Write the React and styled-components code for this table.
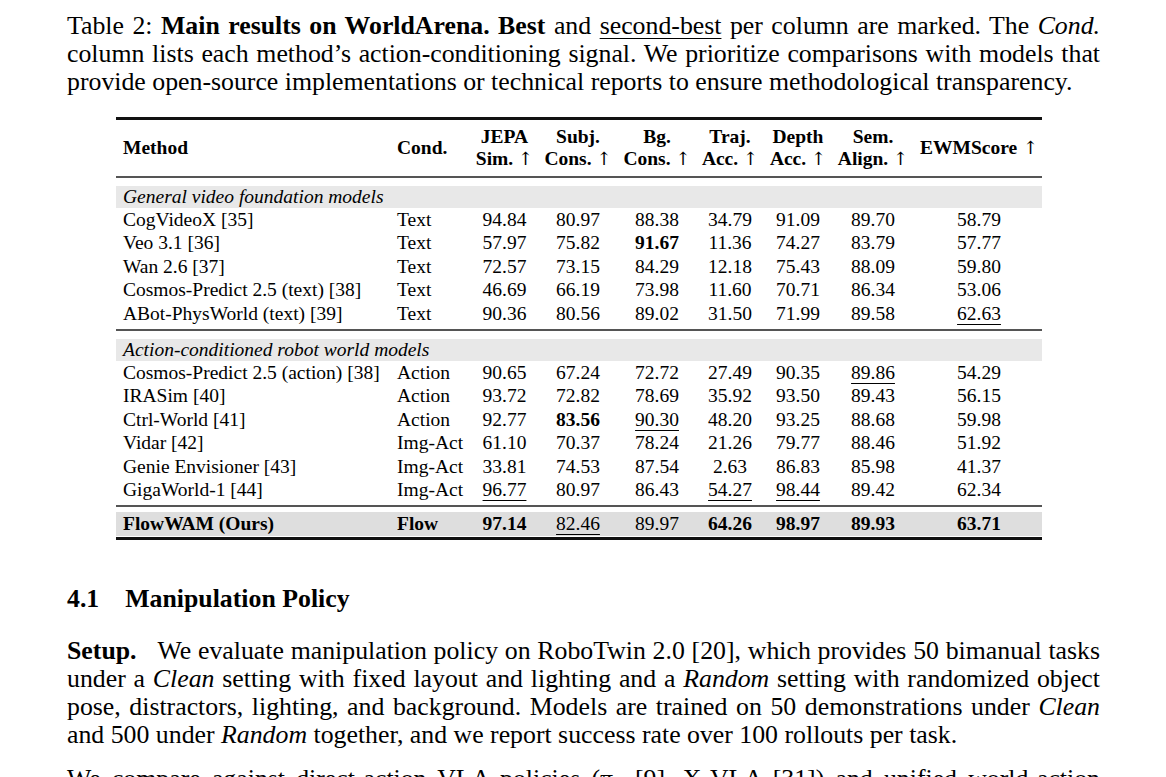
import React from "react";
import styled, { createGlobalStyle } from "styled-components";

const GlobalStyle = createGlobalStyle`
  html, body {
    margin: 0;
    padding: 0;
    background: #fff;
  }
  body {
    font-family: "Liberation Serif", "Times New Roman", serif;
    color: #000;
    overflow: hidden;
  }
`;

const general = [
  ["CogVideoX [35]", "Text", "94.84", "80.97", "88.38", "34.79", "91.09", "89.70", "58.79"],
  ["Veo 3.1 [36]", "Text", "57.97", "75.82", "*91.67", "11.36", "74.27", "83.79", "57.77"],
  ["Wan 2.6 [37]", "Text", "72.57", "73.15", "84.29", "12.18", "75.43", "88.09", "59.80"],
  ["Cosmos-Predict 2.5 (text) [38]", "Text", "46.69", "66.19", "73.98", "11.60", "70.71", "86.34", "53.06"],
  ["ABot-PhysWorld (text) [39]", "Text", "90.36", "80.56", "89.02", "31.50", "71.99", "89.58", "_62.63"],
];

const actionModels = [
  ["Cosmos-Predict 2.5 (action) [38]", "Action", "90.65", "67.24", "72.72", "27.49", "90.35", "_89.86", "54.29"],
  ["IRASim [40]", "Action", "93.72", "72.82", "78.69", "35.92", "93.50", "89.43", "56.15"],
  ["Ctrl-World [41]", "Action", "92.77", "*83.56", "_90.30", "48.20", "93.25", "88.68", "59.98"],
  ["Vidar [42]", "Img-Act", "61.10", "70.37", "78.24", "21.26", "79.77", "88.46", "51.92"],
  ["Genie Envisioner [43]", "Img-Act", "33.81", "74.53", "87.54", "2.63", "86.83", "85.98", "41.37"],
  ["GigaWorld-1 [44]", "Img-Act", "_96.77", "80.97", "86.43", "_54.27", "_98.44", "89.42", "62.34"],
];

const ours = ["*FlowWAM (Ours)", "*Flow", "*97.14", "_82.46", "89.97", "*64.26", "*98.97", "*89.93", "*63.71"];

const columns = [
  { top: "Method", width: 274, align: "left" },
  { top: "Cond.", width: 83, align: "left" },
  { top: "JEPA", bottom: "Sim.", width: 63 },
  { top: "Subj.", bottom: "Cons.", width: 84 },
  { top: "Bg.", bottom: "Cons.", width: 74 },
  { top: "Traj.", bottom: "Acc.", width: 72 },
  { top: "Depth", bottom: "Acc.", width: 64 },
  { top: "Sem.", bottom: "Align.", width: 86 },
  { top: "EWMScore", arrow: true, width: 126 },
];

const Page = styled.div`
  width: 1033px;
  padding: 12px 0 0 67px;
`;

const Caption = styled.div`
  font-size: 25.8px;
  line-height: 28px;
`;

const Line = styled.span`
  display: block;
  text-align: justify;
  text-align-last: ${(p) => (p.$last ? "left" : "justify")};
  white-space: nowrap;
`;

const Bold = styled.b`
  font-weight: 700;
`;

const Under = styled.span`
  text-decoration: underline;
  text-decoration-thickness: 1px;
  text-underline-offset: 4px;
`;

const Em = styled.i`
  font-style: italic;
`;

const Table = styled.table`
  margin: 21px 0 0 49px;
  width: 926px;
  table-layout: fixed;
  border-collapse: collapse;
  font-size: 19.5px;
  border-top: 3px solid #111;
  border-bottom: 3px solid #111;
`;

const Head = styled.thead`
  border-bottom: 2px solid #555;
`;

const HeadCell = styled.th`
  font-weight: 700;
  line-height: 22px;
  padding: 6px 0 6px ${(p) => (p.$align === "left" ? "7px" : "0")};
  text-align: ${(p) => p.$align || "center"};
  vertical-align: middle;
  white-space: nowrap;
`;

const Arrow = styled.span`
  font-family: "DejaVu Serif", serif;
  font-weight: 400;
  font-size: 18px;
`;

const Section = styled.tbody`
  border-bottom: 2px solid #555;
`;

const GroupCell = styled.td`
  padding: 8px 0 0;
`;

const GroupBand = styled.div`
  background: #e8e8e8;
  height: 22px;
  line-height: 22px;
  padding-left: 7px;
  font-style: italic;
`;

const Row = styled.tr`
  background: ${(p) => (p.$shade ? "#dedede" : "transparent")};
`;

const Cell = styled.td`
  line-height: ${(p) => (p.$tall ? "24px" : "23.4px")};
  padding: 0 0 ${(p) => (p.$last ? "4px" : "0")} ${(p) => (p.$align === "left" ? "7px" : "0")};
  text-align: ${(p) => p.$align || "center"};
  white-space: nowrap;
`;

const Gap = styled.td`
  height: ${(p) => p.$h}px;
  padding: 0;
`;

const Heading = styled.h2`
  margin: 45px 0 0;
  font-size: 25.8px;
  line-height: 28px;
  font-weight: 700;
  display: flex;
  gap: 26px;
`;

const Paragraph = styled.p`
  margin: ${(p) => (p.$first ? "24px" : "16px")} 0 0;
  font-size: 25.8px;
  line-height: 28px;
`;

const RunIn = styled.b`
  margin-right: 21px;
`;

function Mark({ value }) {
  if (value.startsWith("*")) return <Bold>{value.slice(1)}</Bold>;
  if (value.startsWith("_")) return <Under>{value.slice(1)}</Under>;
  return value;
}

function DataRow({ cells, last, tall, shade }) {
  return (
    <Row $shade={shade}>
      {cells.map((c, i) => (
        <Cell key={i} $align={columns[i].align} $last={last} $tall={tall}>
          <Mark value={c} />
        </Cell>
      ))}
    </Row>
  );
}

function Group({ title, rows }) {
  return (
    <Section>
      <tr>
        <GroupCell colSpan={9}>
          <GroupBand>{title}</GroupBand>
        </GroupCell>
      </tr>
      {rows.map((r, i) => (
        <DataRow key={r[0]} cells={r} last={i === rows.length - 1} />
      ))}
    </Section>
  );
}

export default function App() {
  return (
    <Page>
      <GlobalStyle />
      <Caption>
        <Line>
          Table 2: <Bold>Main results on WorldArena. Best</Bold> and <Under>second-best</Under> per column are
          marked. The <Em>Cond.</Em>
        </Line>
        <Line>column lists each method’s action-conditioning signal. We prioritize comparisons with models that</Line>
        <Line $last>provide open-source implementations or technical reports to ensure methodological transparency.</Line>
      </Caption>

      <Table>
        <colgroup>
          {columns.map((c, i) => (
            <col key={i} style={{ width: c.width }} />
          ))}
        </colgroup>
        <Head>
          <tr>
            {columns.map((c, i) => (
              <HeadCell key={i} $align={c.align}>
                {c.top}
                {c.arrow && <Arrow> ↑</Arrow>}
                {c.bottom && (
                  <>
                    <br />
                    {c.bottom} <Arrow>↑</Arrow>
                  </>
                )}
              </HeadCell>
            ))}
          </tr>
        </Head>
        <Group title="General video foundation models" rows={general} />
        <Group title="Action-conditioned robot world models" rows={actionModels} />
        <tbody>
          <tr>
            <Gap colSpan={9} $h={5} />
          </tr>
          <DataRow cells={ours} tall shade />
          <tr>
            <Gap colSpan={9} $h={1} />
          </tr>
        </tbody>
      </Table>

      <Heading>
        <span>4.1</span>
        <span>Manipulation Policy</span>
      </Heading>

      <Paragraph $first>
        <Line>
          <RunIn>Setup.</RunIn>We evaluate manipulation policy on RoboTwin 2.0 [20], which provides 50 bimanual tasks
        </Line>
        <Line>
          under a <Em>Clean</Em> setting with fixed layout and lighting and a <Em>Random</Em> setting with randomized
          object
        </Line>
        <Line>
          pose, distractors, lighting, and background. Models are trained on 50 demonstrations under <Em>Clean</Em>
        </Line>
        <Line $last>
          and 500 under <Em>Random</Em> together, and we report success rate over 100 rollouts per task.
        </Line>
      </Paragraph>
      <Paragraph>
        <Line>
          We compare against direct-action VLA policies (π<sub>0</sub> [9], X-VLA [31]) and unified world-action
        </Line>
      </Paragraph>
    </Page>
  );
}
